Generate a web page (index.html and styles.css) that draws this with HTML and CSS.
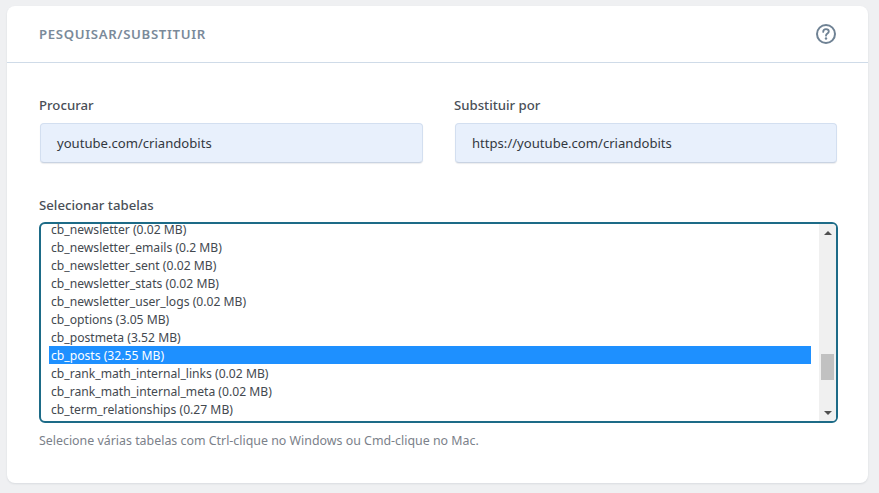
FILE: index.html
```html
<!DOCTYPE html>
<html lang="pt">
<head>
<meta charset="utf-8">
<title>Pesquisar/Substituir</title>
<link rel="stylesheet" href="styles.css">
</head>
<body>
<section class="card">
  <header class="card-head">
    <h2 class="card-title">PESQUISAR/SUBSTITUIR</h2>
    <svg class="help" width="20" height="20" viewBox="0 0 20 20" fill="none" aria-hidden="true">
      <circle cx="10" cy="10" r="9" stroke="#6f8294" stroke-width="2"/>
      <path d="M7.2 7.9C7.2 6.2 8.4 5.2 10 5.2C11.6 5.2 12.8 6.2 12.8 7.6C12.8 9.6 10 9.6 10 11.7" stroke="#6f8294" stroke-width="1.8" stroke-linecap="round"/>
      <circle cx="10" cy="14.5" r="1.2" fill="#6f8294"/>
    </svg>
  </header>
  <div class="card-body">
    <div class="fields">
      <div class="field">
        <label class="label">Procurar</label>
        <div class="input">youtube.com/criandobits</div>
      </div>
      <div class="field">
        <label class="label">Substituir por</label>
        <div class="input">https://youtube.com/criandobits</div>
      </div>
    </div>
    <label class="label">Selecionar tabelas</label>
    <div class="select">
      <ul class="options">
        <li class="option">cb_newsletter (0.02 MB)</li>
        <li class="option">cb_newsletter_emails (0.2 MB)</li>
        <li class="option">cb_newsletter_sent (0.02 MB)</li>
        <li class="option">cb_newsletter_stats (0.02 MB)</li>
        <li class="option">cb_newsletter_user_logs (0.02 MB)</li>
        <li class="option">cb_options (3.05 MB)</li>
        <li class="option">cb_postmeta (3.52 MB)</li>
        <li class="option selected">cb_posts (32.55 MB)</li>
        <li class="option">cb_rank_math_internal_links (0.02 MB)</li>
        <li class="option">cb_rank_math_internal_meta (0.02 MB)</li>
        <li class="option">cb_term_relationships (0.27 MB)</li>
      </ul>
      <div class="scrollbar">
        <span class="arrow up"></span>
        <span class="track"><span class="thumb"></span></span>
        <span class="arrow down"></span>
      </div>
    </div>
    <p class="hint">Selecione várias tabelas com Ctrl-clique no Windows ou Cmd-clique no Mac.</p>
  </div>
</section>
</body>
</html>
```
FILE: styles.css
```css
* { box-sizing: border-box; }
html, body { height: 100%; }
body {
  margin: 0;
  padding: 6px 11px 10px 7px;
  background: #eff0f2;
  font-family: "Noto Sans", "Open Sans", sans-serif;
  overflow: hidden;
}
.card {
  height: 477px;
  background: #fff;
  border-radius: 8px;
  box-shadow: 0 1px 2px rgba(60, 70, 90, 0.12);
}
.card-head {
  height: 57px;
  display: flex;
  align-items: center;
  justify-content: space-between;
  padding: 0 32px;
  border-bottom: 1px solid #cfdbe8;
}
.card-title {
  margin: 0;
  font-size: 13.2px;
  font-weight: 600;
  letter-spacing: 0.65px;
  color: #7a8a9a;
}
.help { display: block; }
.card-body { padding: 33px 30px 0 32px; }
.fields {
  display: grid;
  grid-template-columns: 384px 383px;
  column-gap: 31px;
  margin-bottom: 33px;
}
.label {
  display: block;
  font-size: 13.2px;
  font-weight: 500;
  line-height: 18px;
  color: #4a4f57;
  margin-bottom: 9px;
}
.input {
  margin-left: 1px;
  height: 40px;
  background: #e8f0fc;
  border: 1px solid #d3dff0;
  border-bottom-color: #c9d3e2;
  border-radius: 4px;
  box-shadow: 0 1px 1px rgba(60, 70, 90, 0.1);
  padding-left: 16px;
  display: flex;
  align-items: center;
  font-size: 13.1px;
  color: #33383f;
}
.select {
  display: flex;
  height: 201px;
  margin-top: -1px;
  width: 799px;
  border: 2px solid #1d6b87;
  border-radius: 6px;
  overflow: hidden;
  background: #fff;
}
.options {
  flex: 1;
  list-style: none;
  margin: -4px 0 0;
  padding: 0 8px 0 8px;
}
.option {
  height: 18px;
  line-height: 20px;
  padding-left: 2px;
  font-size: 12.15px;
  color: #43494f;
  white-space: nowrap;
}
.option.selected {
  background: #1e90ff;
  color: #fff;
}
.scrollbar {
  width: 17px;
  display: flex;
  flex-direction: column;
  background: #f0f0f0;
}
.arrow {
  height: 17px;
  display: flex;
  align-items: center;
  justify-content: center;
}
.arrow::before {
  content: "";
  border-left: 4px solid transparent;
  border-right: 4px solid transparent;
}
.arrow.up::before { border-bottom: 4px solid #505050; }
.arrow.down::before { border-top: 4px solid #505050; }
.track {
  flex: 1;
  display: flex;
  flex-direction: column;
  justify-content: flex-end;
  padding: 0 2px 24px;
}
.thumb {
  height: 26px;
  background: #c1c1c1;
}
.hint {
  margin: 9px 0 0;
  font-size: 12.4px;
  line-height: 18px;
  color: #7b818a;
}
```
